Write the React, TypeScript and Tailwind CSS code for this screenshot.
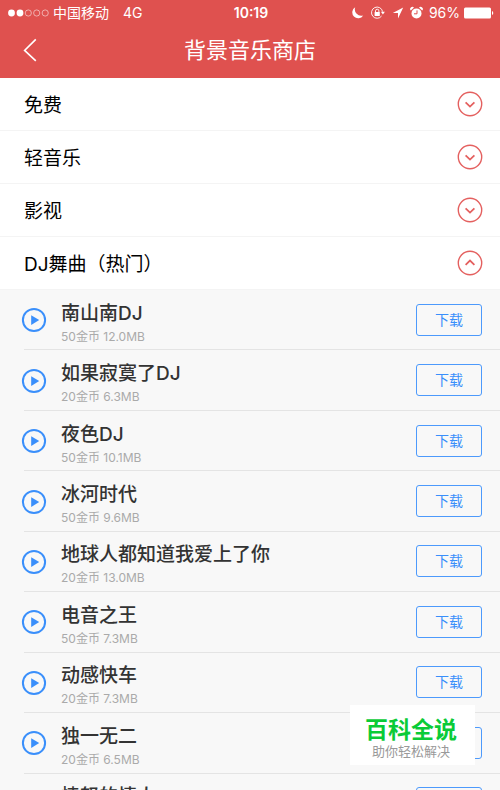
import React, { useState } from 'react';

const sections = ['免费', '轻音乐', '影视', 'DJ舞曲（热门）'];

const songs = [
  { name: '南山南DJ', price: 50, size: '12.0MB' },
  { name: '如果寂寞了DJ', price: 20, size: '6.3MB' },
  { name: '夜色DJ', price: 50, size: '10.1MB' },
  { name: '冰河时代', price: 50, size: '9.6MB' },
  { name: '地球人都知道我爱上了你', price: 20, size: '13.0MB' },
  { name: '电音之王', price: 50, size: '7.3MB' },
  { name: '动感快车', price: 20, size: '7.3MB' },
  { name: '独一无二', price: 20, size: '6.5MB' },
  { name: '愤怒的情人', price: 20, size: '6.8MB' },
];

function StatusBar() {
  return (
    <div className="grid grid-cols-[1fr_auto_1fr] items-center h-[26px] pl-2 pr-[6px] text-[14px] leading-5">
      <div className="flex items-center">
        <svg width="42" height="8" viewBox="0 0 42 8" className="mr-[3px]">
          <circle cx="3.5" cy="4" r="3.4" fill="white" />
          <circle cx="12" cy="4" r="3.4" fill="white" />
          <g fill="none" stroke="white" strokeOpacity="0.65" strokeWidth="0.8">
            <circle cx="20.3" cy="4" r="3.1" />
            <circle cx="28.7" cy="4" r="3.1" />
            <circle cx="37.2" cy="4" r="3.1" />
          </g>
        </svg>
        <span>中国移动</span>
        <span className="ml-[14px]">4G</span>
      </div>
      <span className="font-semibold">10:19</span>
      <div className="flex items-center justify-end">
        <svg width="73" height="14" viewBox="0 0 73 14" className="mr-[6px]">
          {/* moon */}
          <path d="M5.2 1.2A5.9 5.9 0 1 0 13.2 9.4A6.4 6.4 0 0 1 5.2 1.2Z" fill="white" />
          {/* rotation lock */}
          <g fill="none" stroke="white" strokeWidth="0.9">
            <path d="M31.6 10A5.6 5.6 0 1 1 32.6 5.6" />
            <path d="M25.5 6.2V4.9A1.7 1.7 0 0 1 28.9 4.9V6.2" />
          </g>
          <rect x="24.6" y="6" width="5.2" height="4" rx="0.5" fill="white" />
          <path d="M30.9 5.8H34.9L32.9 8.6Z" fill="white" />
          {/* location arrow */}
          <path d="M53.2 1.6L42.8 6.9H48V12.4Z" fill="white" />
          {/* alarm clock */}
          <circle cx="66.5" cy="7.4" r="5" fill="white" />
          <path d="M60.8 4.6A2.2 2.2 0 0 1 64 1.5ZM72.2 4.6A2.2 2.2 0 0 0 69 1.5Z" fill="white" />
          <path d="M67 4.4V7.8H64" fill="none" stroke="#df514f" strokeWidth="1" />
        </svg>
        <span>96%</span>
        <svg width="30" height="12" viewBox="0 0 30 12" className="ml-1">
          <rect x="0" y="0.5" width="27" height="11" rx="1.5" fill="white" />
          <path d="M28 4V8A2.2 2.2 0 0 0 28 4Z" fill="white" />
        </svg>
      </div>
    </div>
  );
}

function ToggleIcon({ open }: { open: boolean }) {
  return (
    <svg width="26" height="26" viewBox="0 0 26 26" fill="none" stroke="#e4605f">
      <circle cx="13" cy="13" r="11.7" strokeWidth="1.4" />
      <path d={open ? 'M8.6 14.8L13 10.6L17.4 14.8' : 'M8.6 11.4L13 15.6L17.4 11.4'} strokeWidth="1.8" />
    </svg>
  );
}

export default function App() {
  const [openSection, setOpenSection] = useState<string | null>('DJ舞曲（热门）');

  return (
    <div className="relative h-screen flex flex-col overflow-hidden bg-[#f8f8f8] font-[Inter,'Noto_Sans_CJK_SC',sans-serif]">
      {/* HEADER */}
      <header className="shrink-0 bg-[#df514f] text-white">
        <StatusBar />
        <div className="grid grid-cols-[1fr_auto_1fr] items-center h-[52px] px-5 pb-1">
          <button type="button" aria-label="返回" className="justify-self-start">
            <svg width="20" height="24" viewBox="0 0 20 24" fill="none" stroke="white" strokeWidth="1.6">
              <path d="M15.8 1.4L4.6 12.4L15.8 22.8" />
            </svg>
          </button>
          <h1 className="text-[22px] leading-8">背景音乐商店</h1>
        </div>
      </header>

      {/* SECTIONS */}
      <main className="flex-1 min-h-0 overflow-y-auto [scrollbar-width:none]">
        {sections.map((title) => {
          const open = openSection === title;
          return (
            <section key={title}>
              <button
                type="button"
                aria-expanded={open}
                onClick={() => setOpenSection(open ? null : title)}
                className="flex w-full items-center justify-between h-[53px] pl-6 pr-[17px] bg-white border-b border-[#f4f4f4] text-[19px] leading-7 text-black"
              >
                <span className="pt-[3px]">{title}</span>
                <ToggleIcon open={open} />
              </button>
              {open && (
                <ul className="grid auto-rows-fr min-h-[544px]">
                  {songs.map((song) => (
                    <li key={song.name} className="flex items-stretch pl-[21px]">
                      <button type="button" aria-label={`播放 ${song.name}`} className="relative z-10 shrink-0">
                        <svg width="26" height="26" viewBox="0 0 26 26">
                          <circle cx="13" cy="13" r="11.1" fill="none" stroke="#3a8ffb" strokeWidth="2" />
                          <path d="M10.2 8.2V18L18.2 13.1Z" fill="#3a8ffb" />
                        </svg>
                      </button>
                      <div className="flex flex-1 items-center justify-between -ml-[23px] pl-[37px] pr-[18px] border-b border-[#e4e4e4]">
                        <div className="pt-[5px]">
                          <p className="text-[19px] leading-7 font-medium text-[#333333]">{song.name}</p>
                          <p className="mt-px text-[12px] leading-4 text-[#aaaaaa]">{song.price}金币 {song.size}</p>
                        </div>
                        <button type="button" className="w-[66px] h-8 border border-[#4d9afc] rounded-[3px] text-[14px] leading-5 text-[#3a8ffb]">
                          下载
                        </button>
                      </div>
                    </li>
                  ))}
                </ul>
              )}
            </section>
          );
        })}
      </main>

      <aside className="absolute right-[25px] bottom-[25px] w-[125px] h-[60px] pt-3 pr-[3px] bg-white text-center">
        <p className="text-[23px] leading-[26px] font-bold text-[#0acb37]">百科全说</p>
        <p className="text-[13px] leading-4 text-[#999999]">助你轻松解决</p>
      </aside>
    </div>
  );
}
